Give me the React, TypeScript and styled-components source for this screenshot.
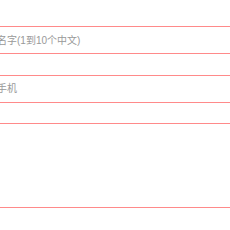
import React from "react";
import styled, { createGlobalStyle } from "styled-components";

const Global = createGlobalStyle`
  html, body { margin: 0; padding: 0; background: #fff; }
  body { font-family: "Liberation Sans", "Noto Sans CJK SC", sans-serif; }
`;

const Form = styled.div`
  display: flex;
  flex-direction: column;
  gap: 20.5px;
  padding-top: 26px;
  overflow: hidden;
  width: 230px;
`;

const Field = styled.div<{ $h: number }>`
  height: ${(p) => p.$h}px;
  border-top: 1px solid #ff8a8a;
  border-bottom: 1px solid #ff8a8a;
  display: flex;
  align-items: center;
  box-sizing: border-box;
  padding-bottom: 2px;
`;

const Placeholder = styled.span`
  margin-left: -3px;
  font-size: 10px;
  color: #999;
  white-space: nowrap;
`;

export default function App() {
  return (
    <>
      <Global />
      <Form>
        <Field $h={28}>
          <Placeholder>名字(1到10个中文)</Placeholder>
        </Field>
        <Field $h={28}>
          <Placeholder>手机</Placeholder>
        </Field>
        <Field $h={85} />
      </Form>
    </>
  );
}
